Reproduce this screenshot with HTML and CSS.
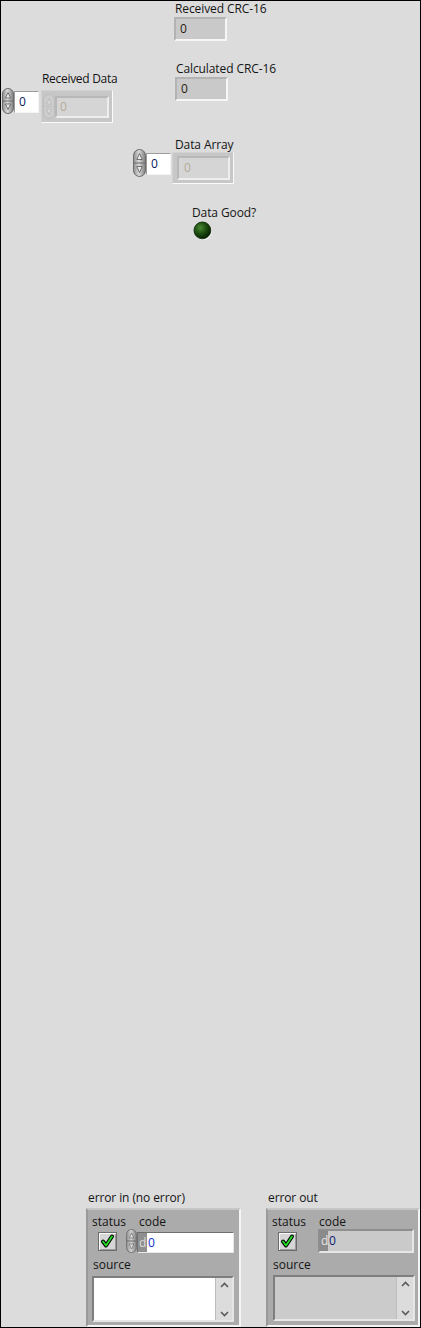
FILE: index.html
```html
<!DOCTYPE html>
<html>
<head>
<meta charset="utf-8">
<link rel="stylesheet" href="styles.css">
</head>
<body>
<div class="panel">

  <div class="ctl c-rcrc">
    <div class="lbl">Received CRC-16</div>
    <div class="ind-box"><span>0</span></div>
  </div>

  <div class="ctl c-ccrc">
    <div class="lbl">Calculated CRC-16</div>
    <div class="ind-box"><span>0</span></div>
  </div>

  <div class="ctl c-rdata">
    <div class="lbl lbl-rdata">Received Data</div>
    <div class="arr-row">
      <svg class="spin" width="12" height="26" viewBox="0 0 12 26">
        <defs><linearGradient id="sg1" x1="0" x2="1"><stop offset="0" stop-color="#8c8c8c"/><stop offset=".45" stop-color="#dadada"/><stop offset="1" stop-color="#7c7c7c"/></linearGradient></defs>
        <rect x=".5" y=".5" width="11" height="25" rx="5.5" fill="url(#sg1)" stroke="#6c6c6c"/>
        <line x1="1" y1="13" x2="11" y2="13" stroke="#6a6a6a"/>
        <path d="M6 4.5 L8.6 10 H3.4 Z" fill="#ececec" stroke="#555" stroke-width=".8"/>
        <path d="M6 21.5 L8.6 16 H3.4 Z" fill="#ececec" stroke="#555" stroke-width=".8"/>
      </svg>
      <div class="idx-box idx-rdata"><span>0</span></div>
      <div class="arr-frame fr-rdata">
        <svg class="spin-dis" width="12" height="25" viewBox="0 0 12 25">
          <rect x=".5" y=".5" width="11" height="24" rx="5.5" fill="#cdcdcd" stroke="#bdbdbd"/>
          <line x1="1" y1="12.5" x2="11" y2="12.5" stroke="#c0c0c0"/>
          <path d="M6 4.5 L8.6 10 H3.4 Z" fill="#dadada" stroke="#b8b8b8" stroke-width=".8"/>
          <path d="M6 20.5 L8.6 15 H3.4 Z" fill="#dadada" stroke="#b8b8b8" stroke-width=".8"/>
        </svg>
        <div class="el-box el-rdata"><span>0</span></div>
      </div>
    </div>
  </div>

  <div class="ctl c-darr">
    <div class="lbl lbl-darr">Data Array</div>
    <div class="arr-row">
      <svg class="spin" width="13" height="28" viewBox="0 0 13 28">
        <defs><linearGradient id="sg2" x1="0" x2="1"><stop offset="0" stop-color="#8c8c8c"/><stop offset=".45" stop-color="#dadada"/><stop offset="1" stop-color="#7c7c7c"/></linearGradient></defs>
        <rect x=".5" y=".5" width="12" height="27" rx="6" fill="url(#sg2)" stroke="#6c6c6c"/>
        <line x1="1" y1="14" x2="12" y2="14" stroke="#6a6a6a"/>
        <path d="M6.5 4.5 L9.2 10.5 H3.8 Z" fill="#ececec" stroke="#555" stroke-width=".8"/>
        <path d="M6.5 23.5 L9.2 17.5 H3.8 Z" fill="#ececec" stroke="#555" stroke-width=".8"/>
      </svg>
      <div class="idx-box idx-darr"><span>0</span></div>
      <div class="arr-frame fr-darr">
        <div class="el-box el-darr"><span>0</span></div>
      </div>
    </div>
  </div>

  <div class="ctl c-good">
    <div class="lbl">Data Good?</div>
    <svg class="led" width="20" height="20" viewBox="0 0 20 20">
      <defs><radialGradient id="ledg" cx=".38" cy=".34" r=".62"><stop offset="0" stop-color="#4a8a34"/><stop offset=".55" stop-color="#1f5012"/><stop offset="1" stop-color="#0b2605"/></radialGradient></defs>
      <circle cx="10.3" cy="10.3" r="8.6" fill="#f6f6f6"/>
      <circle cx="9.4" cy="9.4" r="8.4" fill="url(#ledg)" stroke="#0e2a08" stroke-width=".9"/>
    </svg>
  </div>

  <div class="ctl c-errin">
    <div class="lbl">error in (no error)</div>
    <div class="cluster">
      <div class="cl-labels"><span class="cl-status">status</span><span>code</span></div>
      <div class="cl-ctrls">
        <div class="chk">
          <svg width="17" height="17" viewBox="0 0 17 17">
            <path d="M4 8.5 L7 12.5 L13 3.5" fill="none" stroke="#000" stroke-width="4" stroke-linecap="round" stroke-linejoin="round"/>
            <path d="M4 8.5 L7 12.5 L13 3.5" fill="none" stroke="#22e022" stroke-width="1.8" stroke-linecap="round" stroke-linejoin="round"/>
          </svg>
        </div>
        <svg class="spin-sm" width="11" height="24" viewBox="0 0 11 24">
          <defs><linearGradient id="sg3" x1="0" x2="1"><stop offset="0" stop-color="#8c8c8c"/><stop offset=".45" stop-color="#d4d4d4"/><stop offset="1" stop-color="#7c7c7c"/></linearGradient></defs>
          <rect x=".5" y=".5" width="10" height="23" rx="5" fill="url(#sg3)" stroke="#767676"/>
          <line x1="1" y1="12" x2="10" y2="12" stroke="#6a6a6a"/>
          <path d="M5.5 4 L7.8 9 H3.2 Z" fill="#e4e4e4" stroke="#666" stroke-width=".7"/>
          <path d="M5.5 20 L7.8 15 H3.2 Z" fill="#e4e4e4" stroke="#666" stroke-width=".7"/>
        </svg>
        <div class="code-ctl">
          <span class="radix">d</span><span class="code-val">0</span>
        </div>
      </div>
      <div class="cl-src">source</div>
      <div class="src-box src-in">
        <div class="src-text"></div>
        <div class="sbar">
          <svg width="15" height="42" viewBox="0 0 15 42">
            <path d="M4 9 L7.5 5.5 L11 9" fill="none" stroke="#5a5a5a" stroke-width="1.6"/>
            <path d="M4 34 L7.5 37.5 L11 34" fill="none" stroke="#5a5a5a" stroke-width="1.6"/>
          </svg>
        </div>
      </div>
    </div>
  </div>

  <div class="ctl c-errout">
    <div class="lbl">error out</div>
    <div class="cluster">
      <div class="cl-labels"><span class="cl-status">status</span><span>code</span></div>
      <div class="cl-ctrls">
        <div class="chk">
          <svg width="17" height="17" viewBox="0 0 17 17">
            <path d="M4 8.5 L7 12.5 L13 3.5" fill="none" stroke="#000" stroke-width="4" stroke-linecap="round" stroke-linejoin="round"/>
            <path d="M4 8.5 L7 12.5 L13 3.5" fill="none" stroke="#22e022" stroke-width="1.8" stroke-linecap="round" stroke-linejoin="round"/>
          </svg>
        </div>
        <div class="code-ind">
          <span class="radix">d</span><span class="code-val">0</span>
        </div>
      </div>
      <div class="cl-src">source</div>
      <div class="src-box src-out">
        <div class="src-text"></div>
        <div class="sbar">
          <svg width="15" height="42" viewBox="0 0 15 42">
            <path d="M4 9 L7.5 5.5 L11 9" fill="none" stroke="#5a5a5a" stroke-width="1.6"/>
            <path d="M4 34 L7.5 37.5 L11 34" fill="none" stroke="#5a5a5a" stroke-width="1.6"/>
          </svg>
        </div>
      </div>
    </div>
  </div>

</div>
</body>
</html>
```
FILE: styles.css
```css
* { box-sizing: border-box; }
html, body { margin: 0; padding: 0; }
body {
  width: 421px;
  height: 1328px;
  font-family: "Open Sans", "Noto Sans", sans-serif;
  font-size: 12px;
  color: #141414;
}
.panel {
  position: relative;
  width: 421px;
  height: 1328px;
  background: #dcdcdc;
  border: 1px solid #000;
  overflow: hidden;
}
.ctl {
  position: absolute;
  display: flex;
  flex-direction: column;
  align-items: flex-start;
}
.lbl {
  height: 16px;
  line-height: 16px;
  white-space: nowrap;
  letter-spacing: -0.1px;
}

/* positions on the free front-panel canvas */
.c-rcrc { left: 173px; top: -1px; }
.c-ccrc { left: 174px; top: 59px; }
.c-rdata { left: 1px; top: 70px; }
.c-darr { left: 132px; top: 135px; }
.c-good { left: 191px; top: 204px; }
.c-errin { left: 85px; top: 1189px; }
.c-errout { left: 265px; top: 1189px; }

.c-rcrc .lbl, .c-ccrc .lbl { padding-left: 1px; padding-top: 1px; height: 17px; }

.ind-box {
  width: 53px;
  height: 24px;
  background: #c9c9c9;
  border: 2px solid;
  border-color: #b3b3b3 #f6f6f6 #f6f6f6 #b3b3b3;
  padding-left: 4px;
  line-height: 20px;
  color: #2a1a10;
}

/* arrays */
.arr-row { display: flex; align-items: flex-start; }
.lbl-rdata { padding-left: 40px; letter-spacing: -0.3px; }
.lbl-darr { padding-left: 42px; padding-top: 1px; height: 13px; }
.spin { flex: none; }
.c-rdata .spin { margin-top: 1px; }
.idx-box {
  background: #fff;
  border: 1px solid;
  border-color: #9c9c9c #f4f4f4 #f4f4f4 #9c9c9c;
  width: 25px;
  height: 22px;
  padding-left: 4px;
  line-height: 20px;
  color: #0b1660;
}
.idx-rdata { margin-top: 4px; }
.idx-darr { margin-top: 4px; }
.arr-frame {
  display: flex;
  align-items: flex-start;
  background: #c7c7c7;
  border: 1px solid;
  border-color: #d2d2d2 #fbfbfb #fbfbfb #d2d2d2;
}
.fr-rdata { margin-left: 2px; margin-top: 3px; width: 72px; height: 33px; padding: 2px 2px 0 1px; }
.fr-darr { margin-left: 1px; margin-top: 3px; width: 62px; height: 32px; padding: 3px 3px 0 4px; }
.spin-dis { flex: none; margin-top: 1px; }
.el-box {
  background: #d5d5d5;
  border: 2px solid;
  border-color: #b8b8b8 #eeeeee #eeeeee #b8b8b8;
  padding-left: 3px;
  color: #b6ab98;
  line-height: 17px;
}
.el-rdata { width: 54px; height: 22px; margin-top: 3px; }
.el-darr { width: 53px; height: 24px; }
.el-darr { line-height: 20px; padding-left: 5px; }

.led { margin-left: 1px; }

/* clusters */
.c-errin .lbl, .c-errout .lbl { padding-left: 2px; margin-bottom: 2px; }
.cluster {
  width: 155px;
  height: 119px;
  background: #ababab;
  border: 2px solid;
  border-color: #c6c6c6 #f4f4f4 #f4f4f4 #9a9a9a;
  padding: 4px 4px 0 4px;
  display: flex;
  flex-direction: column;
}
.c-errout .cluster { width: 154px; }
.cl-labels { display: flex; height: 15px; line-height: 15px; white-space: nowrap; }
.cl-status { width: 47px; }
.cl-ctrls { display: flex; align-items: center; height: 24px; }
.chk {
  width: 19px;
  height: 19px;
  margin-left: 6px;
  margin-top: 1px;
  background: #d6d6d6;
  border: 1px solid #6c6c6c;
  box-shadow: inset 1px 1px #fafafa, inset -1px -1px #9a9a9a;
  display: flex;
  align-items: center;
  justify-content: center;
}
.spin-sm { flex: none; margin-left: 9px; }
.code-ctl {
  display: flex;
  width: 97px;
  height: 21px;
  margin-top: 3px;
  border: 1px solid;
  border-color: #6e6e6e #e8e8e8 #e8e8e8 #6e6e6e;
  background: #8c8c8c;
}
.radix {
  width: 9px;
  color: #dcdcdc;
  line-height: 19px;
  padding-left: 1px;
  background: #8f8f8f;
}
.code-ctl .code-val {
  flex: 1;
  background: #fff;
  color: #1030d0;
  line-height: 19px;
  padding-left: 1px;
}
.code-ind {
  display: flex;
  width: 97px;
  height: 24px;
  margin-left: 21px;
  border: 2px solid;
  border-color: #8e8e8e #e6e6e6 #e6e6e6 #8e8e8e;
  background: #c9c9c9;
}
.code-ind .radix { background: #8a8a8a; color: #e4e4e4; line-height: 20px; width: 8px; }
.code-ind .code-val {
  flex: 1;
  color: #0c1a70;
  line-height: 20px;
  padding-left: 1px;
  background: #cacaca;
}
.cl-src { margin-top: 4px; height: 16px; line-height: 16px; padding-left: 1px; }
.src-box {
  display: flex;
  border: 2px solid;
  border-color: #7e7e7e #e6e6e6 #e6e6e6 #7e7e7e;
  height: 46px;
}
.src-in { margin-top: 3px; width: 142px; }
.src-out { margin-top: 2px; width: 142px; margin-left: 1px; }
.src-text { flex: 1; }
.src-in .src-text { background: #fff; }
.src-out .src-text { background: #cbcbcb; }
.sbar {
  width: 17px;
  background: #dcdcdc;
  border-left: 1px solid #bdbdbd;
  display: flex;
  justify-content: center;
}
```
